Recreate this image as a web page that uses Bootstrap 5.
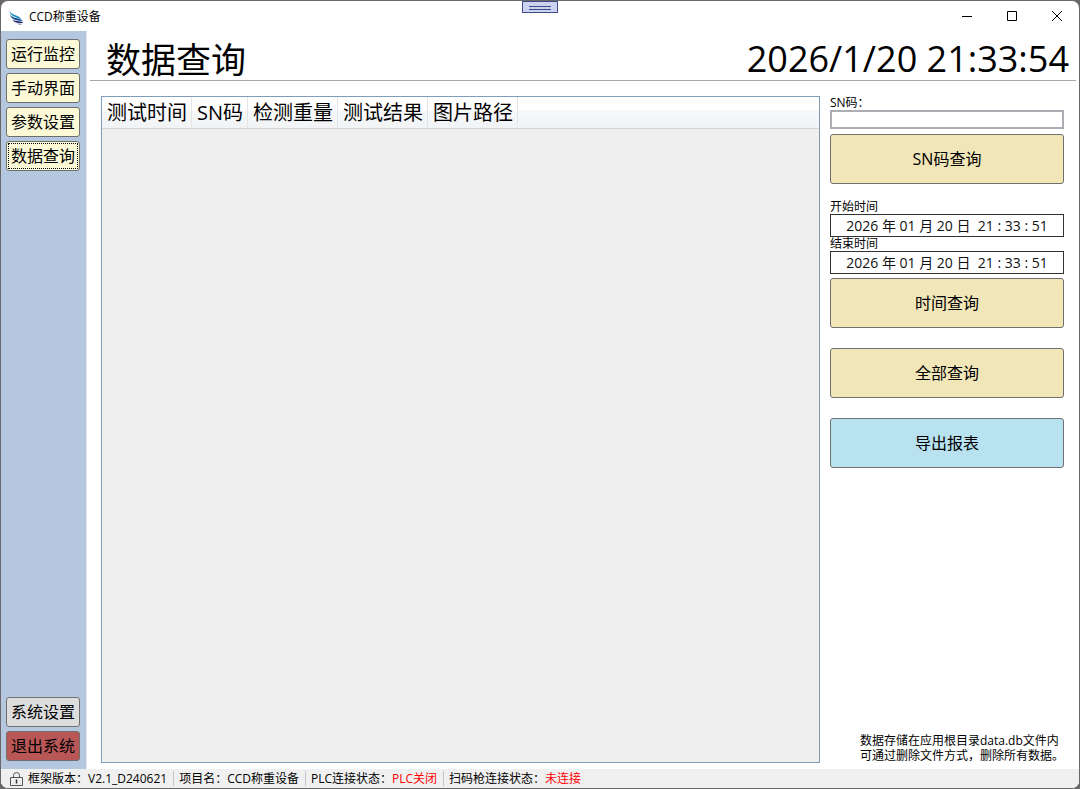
<!DOCTYPE html>
<html lang="zh-CN">
<head>
<meta charset="utf-8">
<meta name="viewport" content="width=device-width, initial-scale=1">
<title>CCD称重设备</title>
<link href="https://cdn.jsdelivr.net/npm/bootstrap@5.3.0/dist/css/bootstrap.min.css" rel="stylesheet">
<style>
body { font-family: "Open Sans", "Noto Sans CJK SC", sans-serif; font-size: 12px; line-height: 16px; color: #000; background: #686868; }
.app-window { border: 1px solid #686868; border-radius: 8px; background: #fff; }
.title-bar { height: 30px; }
.win-btn { width: 45px; height: 28px; border: 0; background: none; padding: 0; }
.grip { position: absolute; top: 0; left: 50%; transform: translateX(-50%); width: 36px; height: 12px; padding: 0; border: 1px solid #424a86; background: #ccd3f0; }
.grip svg { display: block; margin: 0 auto; }
.side { width: 86px; background: #b5c7df; border-right: 1px solid #dce6f3; padding: 8px 6px 8px 5px; gap: 4px; }
.side-btn { height: 30px; padding: 0; border: 1px solid #707070; border-radius: 3px; background: #fbf9d6; font-size: 16px; line-height: 28px; color: #000; white-space: nowrap; }
.side-btn.current { outline: 1px dotted #000; outline-offset: -3px; }
.side-btn.gray { background: #dddddd; }
.side-btn.quit { background: #b95757; }
.page-head { height: 50px; margin: 0 3px; padding: 4px 7px 0 16px; border-bottom: 1px solid #a8a8a8; }
.page-head h1 { font-size: 35px; line-height: 50px; font-weight: 400; margin: 0; }
.clock { font-size: 36px; line-height: 48px; }
.content { padding: 15px 15px 6px 14px; gap: 10px; }
.grid-box { border: 1px solid #7f9db9; background: #efefef; min-width: 0; }
.head-strip { background: linear-gradient(#fff 0 40%, #f7f8f9 45%, #f1f3f5 100%); border-bottom: 1px solid #d5d5d5; }
.head-strip table { margin: 0; }
.head-strip th { height: 31px; padding: 1px 4px 0 5px; border-right: 1px solid #e2e4e6; font-size: 20px; line-height: 30px; font-weight: 400; white-space: nowrap; }
.tools { width: 234px; }
.tools label { display: block; line-height: 14px; }
.sn-box { display: block; width: 100%; height: 19px; border: 2px solid #abadb3; padding: 0 4px; margin-bottom: 5px; background: #fff; }
.date-box { display: block; width: 100%; height: 23px; border: 1px solid #333; padding: 0 0 2px; background: #fff; font-size: 14px; line-height: 19px; text-align: center; color: #111; }
.act-btn { display: block; width: 100%; height: 50px; border: 1px solid #707070; border-radius: 3px; background: #f1e6b8; font-size: 16px; color: #000; padding: 0; }
.act-btn.apart { margin-bottom: 20px; }
.act-btn.sn-go { margin-bottom: 16px; }
.act-btn.export { background: #b8e2f0; }
.date-box.last { margin-bottom: 4px; }
.note { line-height: 15px; white-space: nowrap; }
.status { height: 19px; background: #f0f0f0; border-radius: 0 0 7px 7px; padding-left: 8px; line-height: 19px; white-space: nowrap; }
.status-item + .status-item { border-left: 1px solid #c4c4c4; margin-left: 6px; padding-left: 5px; line-height: 15px; }
.off { color: #f00; }
</style>
</head>
<body>
<div class="app-window d-flex flex-column min-vh-100 position-relative">
  <header class="title-bar d-flex align-items-start justify-content-between">
    <div class="d-flex align-items-end pt-1">
      <svg class="ms-2 me-1" width="16" height="16" viewBox="0 0 16 16" aria-hidden="true">
        <path d="M.5 1c1 3 2.500 4 6 5.200 3 1 5 2.300 6 4.300-2.500-1.300-4-1.500-7-2.800C2.500 6.500.5 4.500.5 1z" fill="#1a8fc4"/>
        <path d="M1 5.500c1.500 2.700 4 3 7 3.800 3 .7 4.600 1.500 6 3.200-2.500-1-4.500-.8-7.500-1.500C3.500 10.300 1.500 8.500 1 5.500z" fill="#17528f"/>
        <path d="M3.500 10.800c2 1.300 3.500 1.200 6 1.400 2.500.2 3.700.6 5 1.800-2 0-4 .2-6.500-.3-2.200-.5-3.700-1.200-4.500-2.900zM8 14.400c2 .3 3.500 0 5.500.6-2 .7-4 .5-5.500-.6z" fill="#23286c"/>
      </svg>
      <span class="mt-1">CCD称重设备</span>
    </div>
    <div class="d-flex">
      <button class="win-btn" type="button" aria-label="最小化"><svg width="10" height="10" viewBox="0 0 10 10"><path d="M0 5.500h10" stroke="#000"/></svg></button>
      <button class="win-btn" type="button" aria-label="最大化"><svg width="10" height="10" viewBox="0 0 10 10"><path d="M.5.5h9v9h-9z" fill="none" stroke="#000"/></svg></button>
      <button class="win-btn" type="button" aria-label="关闭"><svg width="10" height="10" viewBox="0 0 10 10"><path d="M0 0l10 10M10 0L0 10" stroke="#000"/></svg></button>
    </div>
  </header>

  <div class="d-flex flex-grow-1">
    <nav class="side d-flex flex-column flex-shrink-0">
      <button class="side-btn" type="button">运行监控</button>
      <button class="side-btn" type="button">手动界面</button>
      <button class="side-btn" type="button">参数设置</button>
      <button class="side-btn current" type="button">数据查询</button>
      <button class="side-btn gray mt-auto" type="button">系统设置</button>
      <button class="side-btn quit" type="button">退出系统</button>
    </nav>

    <main class="d-flex flex-column flex-grow-1">
      <div class="page-head d-flex justify-content-between">
        <h1>数据查询</h1>
        <div class="clock">2026/1/20 21:33:54</div>
      </div>
      <div class="content d-flex flex-grow-1">
        <div class="grid-box flex-grow-1">
          <div class="head-strip">
            <table>
              <thead><tr><th scope="col">测试时间</th><th scope="col">SN码</th><th scope="col">检测重量</th><th scope="col">测试结果</th><th scope="col">图片路径</th></tr></thead>
            </table>
          </div>
        </div>
        <form class="tools d-flex flex-column flex-shrink-0">
          <label for="sn">SN码：</label>
          <input class="sn-box" id="sn" type="text">
          <button class="act-btn sn-go" type="button">SN码查询</button>
          <label for="from">开始时间</label>
          <input class="date-box" id="from" type="text" value="2026 年 01 月 20 日  21 : 33 : 51">
          <label for="to">结束时间</label>
          <input class="date-box last" id="to" type="text" value="2026 年 01 月 20 日  21 : 33 : 51">
          <button class="act-btn apart" type="button">时间查询</button>
          <button class="act-btn apart" type="button">全部查询</button>
          <button class="act-btn export" type="button">导出报表</button>
          <div class="note mt-auto align-self-end">数据存储在应用根目录data.db文件内<br>可通过删除文件方式，删除所有数据。</div>
        </form>
      </div>
    </main>
  </div>

  <footer class="status d-flex align-items-center">
    <svg class="flex-shrink-0" width="15" height="16" viewBox="0 0 15 16" aria-hidden="true"><path d="M1.500 6.500h12v8h-12zM4.500 6V4.500a3 3 0 0 1 6 0V6" fill="none" stroke="#555"/><path d="M7.500 8.500v4" stroke="#333" stroke-width="1.500"/></svg>
    <div class="status-item ms-1">框架版本：V2.1_D240621</div>
    <div class="status-item">项目名：CCD称重设备</div>
    <div class="status-item">PLC连接状态：<span class="off">PLC关闭</span></div>
    <div class="status-item">扫码枪连接状态：<span class="off">未连接</span></div>
  </footer>
  <button class="grip" type="button" aria-label="工具栏"><svg width="22" height="5" viewBox="0 0 22 5"><path d="M0 1.500h22M0 4.500h22" stroke="#424a86"/></svg></button>
</div>
</body>
</html>
